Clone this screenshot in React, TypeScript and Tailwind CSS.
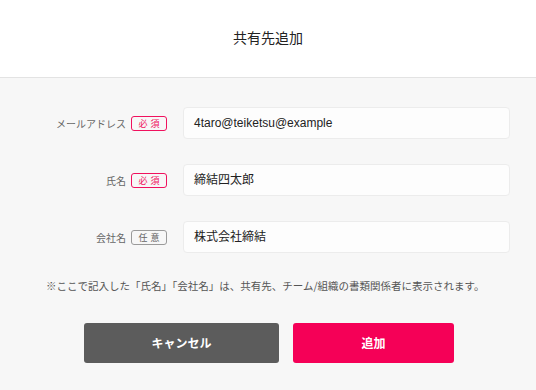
const font = { fontFamily: '"Noto Sans CJK JP", "Liberation Sans", sans-serif' };

function Badge({ required }: { required: boolean }) {
  return (
    <span
      className={
        "ml-[5px] flex h-[15px] w-[36px] items-center justify-center rounded-[3px] border text-[9px] leading-none tracking-[3px] pl-[3px] " +
        (required ? "border-[#f0115e] text-[#f0115e]" : "border-[#9a9a9a] text-[#666]")
      }
    >
      {required ? "必須" : "任意"}
    </span>
  );
}

function Row({ label, value, required }: { label: string; value: string; required: boolean }) {
  return (
    <div className="flex items-center">
      <div className="flex w-[167px] shrink-0 items-center justify-end">
        <span className="text-[10px] text-[#666]">{label}</span>
        <Badge required={required} />
      </div>
      <div className="ml-[16px] flex h-[32px] w-[327px] items-center rounded-[4px] border border-[#ececec] bg-[#fdfdfd] px-[10px] text-[12px] text-[#222]">
        <span style={{ fontFamily: '"Liberation Sans", "Noto Sans CJK JP", sans-serif' }}>{value}</span>
      </div>
    </div>
  );
}

export default function App() {
  return (
    <div className="h-[390px] w-[536px] overflow-hidden bg-[#f7f7f7]" style={font}>
      <div className="flex h-[78px] items-center justify-center border-b border-[#e3e3e3] bg-white pb-[2px]">
        <span className="text-[14px] text-[#222]">共有先追加</span>
      </div>
      <div className="flex flex-col gap-[25px] pt-[29px]">
        <Row label="メールアドレス" value="4taro@teiketsu@example" required />
        <Row label="氏名" value="締結四太郎" required />
        <Row label="会社名" value="株式会社締結" required={false} />
      </div>
      <p className="mt-[25px] pl-[46px] text-[10.5px] text-[#555]">
        ※ここで記入した「氏名」「会社名」は、共有先、チーム/組織の書類関係者に表示されます。
      </p>
      <div className="mt-[29px] flex justify-center gap-[14px] pl-[2px]">
        <button className="h-[40px] w-[195px] rounded-[3px] bg-[#5c5c5c] text-[12px] font-bold text-white">
          キャンセル
        </button>
        <button className="h-[40px] w-[161px] rounded-[3px] bg-[#f50057] text-[12px] font-bold text-white">
          追加
        </button>
      </div>
    </div>
  );
}
